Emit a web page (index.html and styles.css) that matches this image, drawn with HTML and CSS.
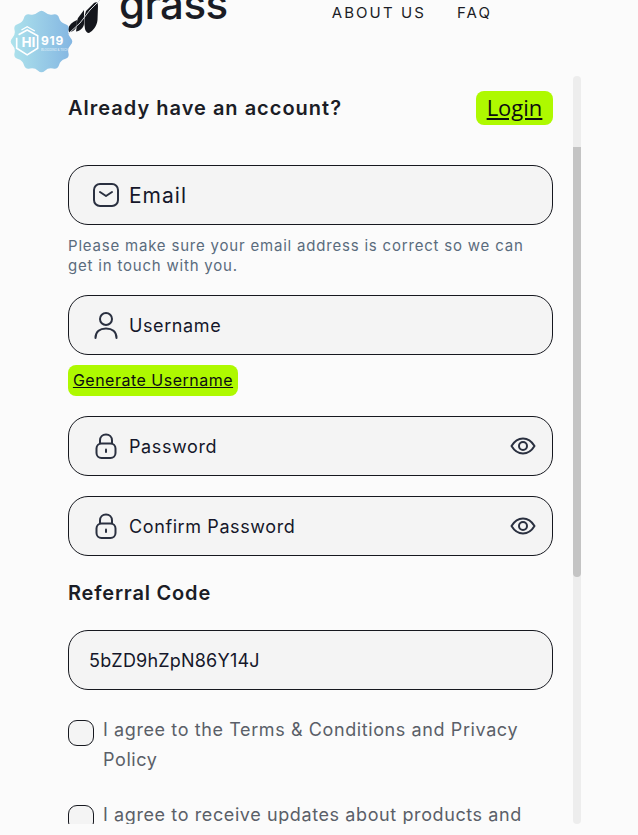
FILE: index.html
```html
<!DOCTYPE html>
<html lang="en">
<head>
<meta charset="utf-8">
<title>Grass</title>
<link rel="stylesheet" href="styles.css">
</head>
<body>
<header class="topbar">
  <div class="brand">
    <svg class="brand-mark" width="40" height="36" viewBox="0 0 40 36"><path fill="#14161c" d="M0 29C1 25 4 22 9 20L8.500 26C8 29 5 32 1 32Z M8 31.500C9 27 8.500 21 10 18L16 10 16 24C15.500 28 12 31 8 31.500Z M17 29C16 23 16 16 18 11L26 3C29 1 30 3 30 6L29.500 20C29 26 25 31 21 33 19 33 17.500 31 17 29Z"/><path fill="none" stroke="#d5d8dc" stroke-width="1" d="M0 34 12 23 22 10 32 0"/></svg>
    <span class="brand-name">grass</span>
  </div>
  <nav class="nav"><a>ABOUT US</a><a>FAQ</a></nav>
</header>
<div class="badge">
  <svg class="badge-shape" width="63" height="63" viewBox="-1 -1 66 66"><defs><linearGradient id="bg" x1="0" y1="0" x2="1" y2="0"><stop offset="0" stop-color="#aee3ec"/><stop offset="1" stop-color="#84b6e2"/></linearGradient></defs><path fill="url(#bg)" d="M62.520 35.620Q59.050 39.250 60.250 44.120Q61.440 49 56.620 50.400Q51.800 51.800 50.400 56.620Q49 61.440 44.120 60.250Q39.250 59.050 35.620 62.520Q32 66 28.380 62.520Q24.750 59.050 19.880 60.250Q15 61.440 13.600 56.620Q12.200 51.800 7.380 50.400Q2.560 49 3.750 44.120Q4.950 39.250 1.480 35.620Q-2 32 1.480 28.380Q4.950 24.750 3.750 19.880Q2.560 15 7.380 13.600Q12.200 12.200 13.600 7.380Q15 2.560 19.880 3.750Q24.750 4.950 28.380 1.480Q32 -2 35.620 1.480Q39.250 4.950 44.120 3.750Q49 2.560 50.400 7.380Q51.800 12.200 56.620 13.600Q61.440 15 60.250 19.880Q59.050 24.750 62.520 28.380Q66 32 62.520 35.620Z"/><path fill="none" stroke="#fff" stroke-width="1.700" d="M8 25 17 20 28 26V39L17 46 6 39V28"/><path fill="none" stroke="#fff" stroke-width="1.300" d="M11 20 17 16.500 25 21"/></svg>
  <span class="badge-hi">HI</span>
  <span class="badge-num">919</span>
  <span class="badge-sub">BLOGGING &amp; TECH</span>
</div>
<main class="panel">
  <div class="login-row">
    <h2 class="login-title">Already have an account?</h2>
    <a class="login-btn">Login</a>
  </div>
  <div class="field first">
    <svg class="icon" width="28" height="28" viewBox="0 0 28 28"><rect x="2" y="3" width="24" height="22" rx="6" fill="none" stroke="#2a3040" stroke-width="2"/><path d="M8 11 14 15 20 11" fill="none" stroke="#2a3040" stroke-width="2" stroke-linecap="round" stroke-linejoin="round"/></svg>
    <span class="field-label email">Email</span>
  </div>
  <p class="help">Please make sure your email address is correct so we can get in touch with you.</p>
  <div class="field">
    <svg class="icon" width="28" height="28" viewBox="0 0 28 28"><circle cx="14" cy="8" r="6" fill="none" stroke="#2a3040" stroke-width="2"/><path d="M3.500 27C3.500 20.500 8 17.500 14 17.500 20 17.500 24.500 20.500 24.500 27" fill="none" stroke="#2a3040" stroke-width="2" stroke-linecap="round"/></svg>
    <span class="field-label">Username</span>
  </div>
  <a class="gen-btn">Generate Username</a>
  <div class="field">
    <svg class="icon" width="28" height="28" viewBox="0 0 28 28"><path d="M8 12V8.500C8 5 10.500 2.500 14 2.500 17.500 2.500 20 5 20 8.500V12" fill="none" stroke="#2a3040" stroke-width="2"/><rect x="4.500" y="11.500" width="19" height="14.500" rx="5" fill="none" stroke="#2a3040" stroke-width="2"/><path d="M14 17.500V20" stroke="#2a3040" stroke-width="2" stroke-linecap="round"/></svg>
    <span class="field-label">Password</span>
    <svg class="eye" width="26" height="26" viewBox="0 0 26 26"><path d="M1.500 13C4.500 8 8.500 5.500 13 5.500 17.500 5.500 21.500 8 24.500 13 21.500 18 17.500 20.500 13 20.500 8.500 20.500 4.500 18 1.500 13Z" fill="none" stroke="#2a3040" stroke-width="2" stroke-linejoin="round"/><circle cx="13" cy="13" r="4" fill="none" stroke="#2a3040" stroke-width="2"/></svg>
  </div>
  <div class="field gap">
    <svg class="icon" width="28" height="28" viewBox="0 0 28 28"><path d="M8 12V8.500C8 5 10.500 2.500 14 2.500 17.500 2.500 20 5 20 8.500V12" fill="none" stroke="#2a3040" stroke-width="2"/><rect x="4.500" y="11.500" width="19" height="14.500" rx="5" fill="none" stroke="#2a3040" stroke-width="2"/><path d="M14 17.500V20" stroke="#2a3040" stroke-width="2" stroke-linecap="round"/></svg>
    <span class="field-label">Confirm Password</span>
    <svg class="eye" width="26" height="26" viewBox="0 0 26 26"><path d="M1.500 13C4.500 8 8.500 5.500 13 5.500 17.500 5.500 21.500 8 24.500 13 21.500 18 17.500 20.500 13 20.500 8.500 20.500 4.500 18 1.500 13Z" fill="none" stroke="#2a3040" stroke-width="2" stroke-linejoin="round"/><circle cx="13" cy="13" r="4" fill="none" stroke="#2a3040" stroke-width="2"/></svg>
  </div>
  <h3 class="ref-title">Referral Code</h3>
  <div class="field code"><span class="field-label">5bZD9hZpN86Y14J</span></div>
  <label class="check first-check"><span class="box"></span><span class="check-text">I agree to the Terms &amp; Conditions and Privacy Policy</span></label>
  <label class="check second-check"><span class="box"></span><span class="check-text">I agree to receive updates about products and</span></label>
  <div class="scrolltrack"><div class="scrollthumb"></div></div>
</main>
</body>
</html>
```
FILE: styles.css
```css
* { box-sizing: border-box; }
html, body { margin: 0; height: 835px; overflow: hidden; }
body {
  background: #fbfbfb;
  color: #1b1d26;
  font-family: Inter, "Noto Sans", sans-serif;
  position: relative;
}
.topbar {
  height: 76px;
  display: flex;
  align-items: flex-start;
  position: relative;
  overflow: hidden;
}
.brand { display: flex; align-items: flex-start; margin-left: 68px; }
.brand-mark { flex: none; }
.brand-name {
  margin: -21px 0 0 11px;
  font-family: Inter, sans-serif;
  font-weight: 500;
  font-size: 42px;
  line-height: 50px;
  letter-spacing: -0.5px;
  color: #1a1c24;
}
.nav { display: flex; gap: 31px; margin-left: 104px; margin-top: 4px; }
.nav a { font-size: 15px; line-height: 18px; letter-spacing: 2.1px; color: #1b1d26; }
.badge { position: absolute; left: 10px; top: 10px; width: 63px; height: 63px; color: #fff; }
.badge-shape { display: block; }
.badge-hi { position: absolute; left: 9px; top: 23px; width: 19px; text-align: center; font: 700 14px/18px "Liberation Sans", sans-serif; }
.badge-num { position: absolute; left: 31px; top: 24px; font: 700 12px/14px Inter, sans-serif; letter-spacing: 0.8px; }
.badge-sub { position: absolute; left: 31px; top: 38px; font: 400 3px/4px Inter, sans-serif; white-space: nowrap; opacity: 0.8; }
.panel {
  position: relative;
  width: 513px;
  height: 748px;
  margin-left: 68px;
  padding-right: 28px;
  overflow: hidden;
}
.login-row { display: flex; justify-content: space-between; align-items: center; height: 34px; margin-top: 15px; }
.login-title { margin: 0; font-size: 20px; line-height: 28px; font-weight: 600; letter-spacing: 1px; }
.login-btn {
  background: #aef900;
  border-radius: 8px;
  padding: 0 10px;
  height: 34px;
  width: 77px;
  text-align: center;
  font-family: "Open Sans", sans-serif;
  font-size: 22px;
  line-height: 33px;
  color: #0c0d10;
  text-decoration: underline;
}
.field {
  display: flex;
  align-items: center;
  height: 60px;
  padding: 0 16px 0 23px;
  background: #f4f4f4;
  border: 1px solid #16181f;
  border-radius: 20px;
}
.field.first { margin-top: 40px; }
.field.gap { margin-top: 20px; }
.icon { flex: none; }
.eye { flex: none; margin-left: auto; }
.field-label { margin-left: 9px; font-size: 18px; letter-spacing: 0.6px; color: #15172a; }
.email { font-size: 21px; letter-spacing: 1px; }
.help { max-width: 470px; margin: 11px 0 19px; font-size: 15px; line-height: 20px; color: #5a6b7d; letter-spacing: 0.8px; }
.gen-btn {
  display: block;
  width: 170px;
  height: 31px;
  margin: 10px 0 20px;
  background: #aef900;
  border-radius: 8px;
  text-align: center;
  font-size: 16px;
  line-height: 30px;
  letter-spacing: 0.5px;
  color: #0c0d10;
  text-decoration: underline;
}
.ref-title { margin: 23px 0 23px; font-size: 20px; line-height: 28px; font-weight: 600; letter-spacing: 0.8px; }
.code { padding-left: 20px; }
.code .field-label { margin-left: 0; letter-spacing: 0.2px; }
.check { display: flex; gap: 9px; align-items: flex-start; }
.first-check { margin-top: 25px; }
.second-check { margin-top: 25px; }
.box { flex: none; width: 26px; height: 26px; margin-top: 5px; border: 1px solid #16181f; border-radius: 9px; background: #f4f4f4; }
.check-text { max-width: 425px; font-size: 18px; line-height: 30px; letter-spacing: 0.6px; color: #5a5f68; }
.scrolltrack { position: absolute; right: 0; top: 0; width: 8px; height: 748px; border-radius: 4px; background: #ededed; }
.scrollthumb { position: absolute; left: 0; top: 71px; width: 8px; height: 430px; border-radius: 0 0 4px 4px; background: #c4c4c4; }
```
